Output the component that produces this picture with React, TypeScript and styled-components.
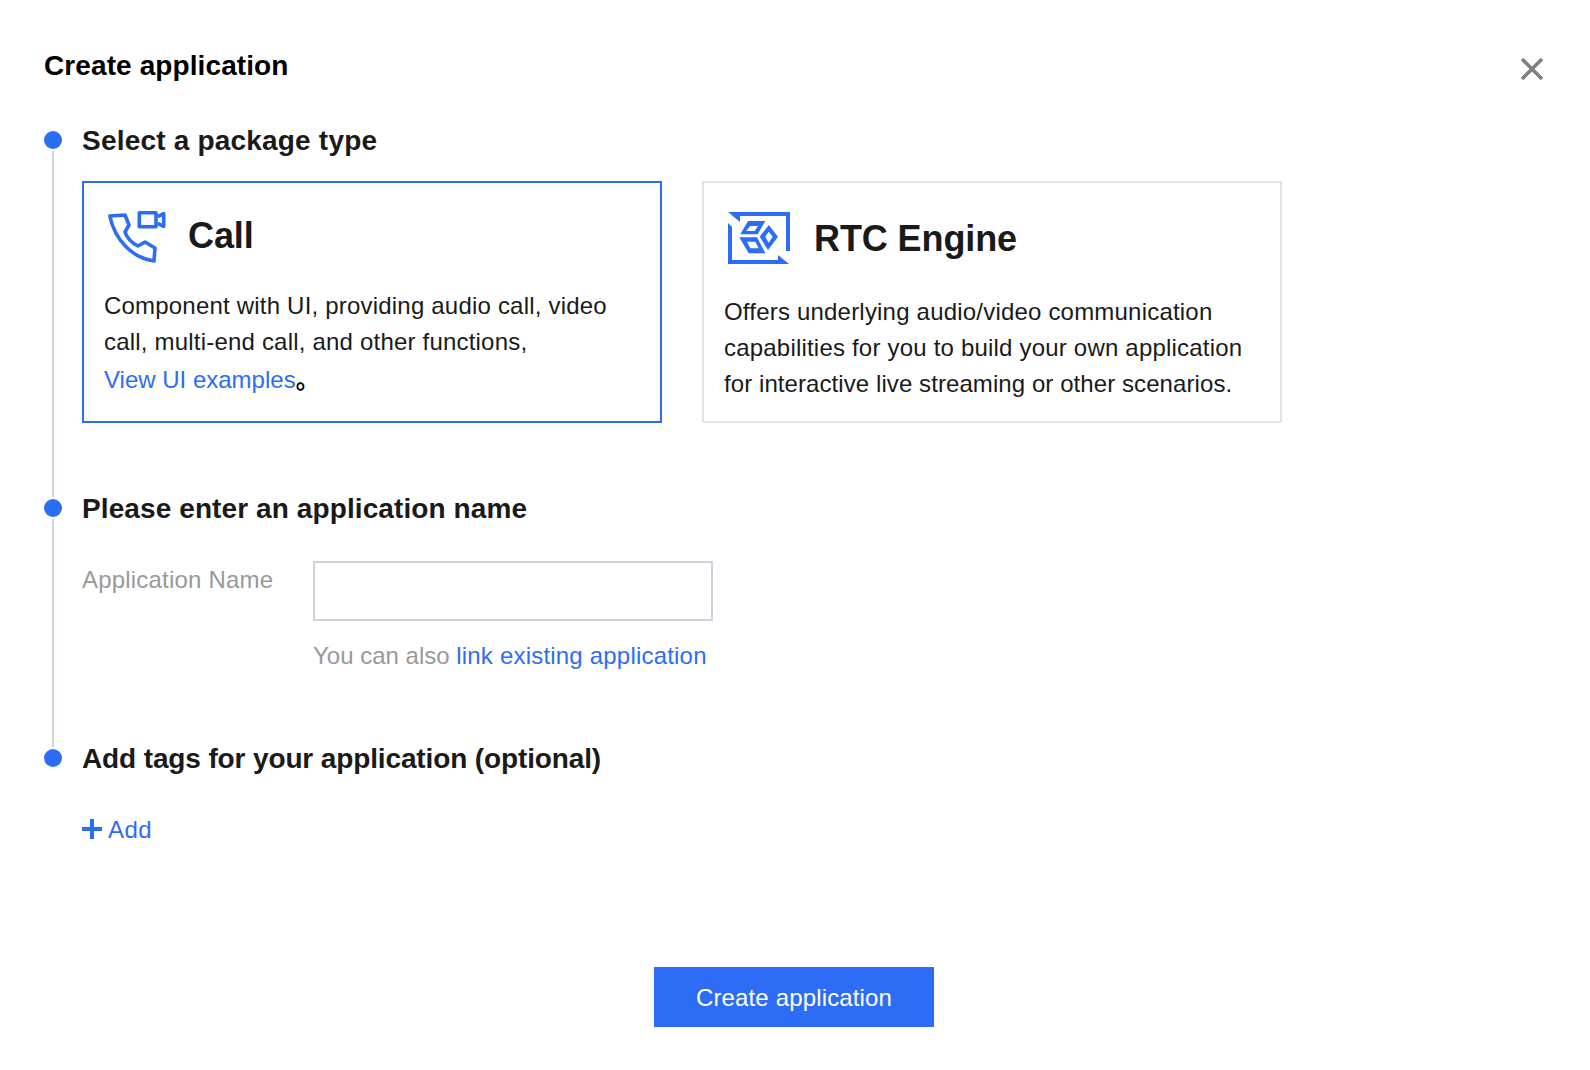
import React from "react";
import styled, { createGlobalStyle } from "styled-components";

const GlobalStyle = createGlobalStyle`
  * { box-sizing: border-box; }
  html, body { margin: 0; background: #fff; }
  body { font-family: "Liberation Sans", Arial, sans-serif; color: #1a1a1a; }
`;

const Dialog = styled.div`
  width: 1590px;
  height: 1070px;
  padding: 49px 44px 43px 44px;
  display: flex;
  flex-direction: column;
`;

const Header = styled.div`
  display: flex;
  justify-content: space-between;
  align-items: center;
  height: 34px;
  margin-bottom: 40px;
`;

const Title = styled.h1`
  margin: 0;
  font-size: 28px;
  line-height: 34px;
  font-weight: 700;
  letter-spacing: 0.1px;
  color: #000;
`;

const CloseButton = styled.button`
  border: none;
  background: none;
  padding: 0;
  margin: 5px 2px 0 0;
  width: 24px;
  height: 24px;
  cursor: pointer;
  display: flex;
`;

const Steps = styled.div`
  flex: 1;
`;

const Step = styled.section<{ $height: number }>`
  display: grid;
  grid-template-columns: 18px 1fr;
  column-gap: 20px;
  height: ${(p) => p.$height}px;
`;

const Rail = styled.div`
  display: flex;
  flex-direction: column;
  align-items: center;
  padding-top: 8px;
`;

const Dot = styled.span`
  width: 18px;
  height: 18px;
  border-radius: 50%;
  background: #2d6df6;
  flex: none;
`;

const Line = styled.span`
  width: 2px;
  flex: 1;
  margin: 2px 0 -6px;
  background: #d0d4e4;
`;

const StepTitle = styled.h2<{ $track: number }>`
  margin: 0;
  font-size: 28px;
  line-height: 36px;
  font-weight: 700;
  letter-spacing: ${(p) => p.$track}px;
  color: #1a1a1a;
`;

const Cards = styled.div`
  display: flex;
  gap: 40px;
  margin-top: 22px;
`;

const Card = styled.div<{ $selected?: boolean }>`
  width: 580px;
  height: 242px;
  border: 2px solid ${(p) => (p.$selected ? "#2d6df6" : "#e5e5e5")};
  padding: ${(p) => (p.$selected ? "28px 20px" : "29px 20px")};
`;

const CardHead = styled.div<{ $gap: number; $inset: number }>`
  display: flex;
  align-items: center;
  gap: ${(p) => p.$gap}px;
  padding-left: ${(p) => p.$inset}px;
`;

const CardName = styled.div<{ $above?: number; $below?: number }>`
  margin: ${(p) => p.$above ?? 0}px 0 ${(p) => p.$below ?? 0}px;
  font-size: 36px;
  font-weight: 700;
  line-height: 44px;
  letter-spacing: -0.1px;
  color: #1a1a1a;
`;

const CardText = styled.p<{ $top: number }>`
  margin: ${(p) => p.$top}px 0 0;
  font-size: 24px;
  line-height: 36px;
  letter-spacing: 0.2px;
  color: #1a1a1a;
  white-space: nowrap;
`;

const TightLine = styled.span`
  letter-spacing: 0.08px;
`;

const Link = styled.a`
  color: #2d6df6;
  text-decoration: none;
  cursor: pointer;
`;

const ExampleLink = styled(Link)`
  display: inline-block;
  margin-top: 1px;
  letter-spacing: 0;
`;

const Stop = styled.span`
  font-family: "Noto Sans CJK SC", sans-serif;
  font-weight: 700;
  color: #000;
`;

const Row = styled.div`
  display: grid;
  grid-template-columns: 231px 400px;
  margin-top: 34px;
`;

const Label = styled.label`
  font-size: 24px;
  line-height: 38px;
  letter-spacing: 0.2px;
  color: #999;
`;

const Input = styled.input`
  display: block;
  width: 400px;
  height: 60px;
  border: 2px solid #cfd1dc;
  outline: none;
  background: #fff;
  font-size: 24px;
  padding: 0 16px;
`;

const Hint = styled.p`
  grid-column: 2;
  margin: 17px 0 0;
  font-size: 24px;
  line-height: 36px;
  color: #999;
  white-space: nowrap;

  a {
    letter-spacing: 0.2px;
  }
`;

const AddLink = styled.a`
  display: flex;
  align-items: center;
  gap: 6px;
  margin-top: 35px;
  font-size: 24px;
  line-height: 36px;
  letter-spacing: 0.5px;
  color: #2d6df6;
  cursor: pointer;

  svg {
    margin-top: -3px;
  }
`;

const Footer = styled.div`
  display: flex;
  justify-content: center;
  padding-right: 2px;
`;

const PrimaryButton = styled.button`
  width: 280px;
  height: 60px;
  border: none;
  padding: 1px 0 0;
  background: #2d6df6;
  color: #fff;
  font-family: inherit;
  font-size: 24px;
  letter-spacing: 0.15px;
  cursor: pointer;
`;

function CallIcon() {
  return (
    <svg width="58" height="52" viewBox="0 0 58 52" fill="none" stroke="#2d6df6" strokeWidth="3.6" strokeLinejoin="round">
      <path d="M1.8 5 L17 4 L21 14 L17 21 C19 27 24 32 30 35 L37 31 L47 37 L46 50 C25 47 7 30 1.8 5 Z" />
      <rect x="31.3" y="1.8" width="16.7" height="14" />
      <path d="M49.7 5.7 L55.7 2.6 V15.4 L49.7 12.3" />
    </svg>
  );
}

function RtcIcon() {
  return (
    <svg width="62" height="52" viewBox="0 0 62 52" fill="#2d6df6">
      <path d="M0 0 H62 V39 H58 V4 H12 V10 Z" />
      <path d="M0 11 L4 15 V48 H50 V43 L61 52 H0 Z" />
      <path fillRule="evenodd" d="M20 9 H37.3 L29.7 22.3 H12.3 Z M22.3 14 L18.3 19 H26.7 L30 14 Z" />
      <path fillRule="evenodd" d="M11.3 25.3 H29 L37.3 41.3 H20.7 Z M19 29.7 L22.3 36.3 H30.7 L27.3 29.7 Z" />
      <path fillRule="evenodd" d="M40.7 13 L50 24.7 L40 38 L31.7 24.7 Z M40.7 19.7 L37.3 24.7 L40.7 30.7 L44.7 24.7 Z" />
    </svg>
  );
}

export default function App() {
  return (
    <>
      <GlobalStyle />
      <Dialog>
        <Header>
          <Title>Create application</Title>
          <CloseButton aria-label="Close">
            <svg width="24" height="24" viewBox="0 0 24 24" stroke="#808080" strokeWidth="3.6">
              <path d="M2 2 L22 22 M22 2 L2 22" />
            </svg>
          </CloseButton>
        </Header>
        <Steps>
          <Step $height={368}>
            <Rail>
              <Dot />
              <Line />
            </Rail>
            <div>
              <StepTitle $track={0.2}>Select a package type</StepTitle>
              <Cards>
                <Card $selected>
                  <CardHead $gap={22} $inset={4}>
                    <CallIcon />
                    <CardName $below={2}>Call</CardName>
                  </CardHead>
                  <CardText $top={25}>
                    Component with UI, providing audio call, video
                    <br />
                    call, multi-end call, and other functions,
                    <br />
                    <ExampleLink>View UI examples</ExampleLink>
                    <Stop>。</Stop>
                  </CardText>
                </Card>
                <Card>
                  <CardHead $gap={24} $inset={4}>
                    <RtcIcon />
                    <CardName $above={2}>RTC Engine</CardName>
                  </CardHead>
                  <CardText $top={30}>
                    Offers underlying audio/video communication
                    <br />
                    capabilities for you to build your own application
                    <br />
                    <TightLine>for interactive live streaming or other scenarios.</TightLine>
                  </CardText>
                </Card>
              </Cards>
            </div>
          </Step>
          <Step $height={250}>
            <Rail>
              <Dot />
              <Line />
            </Rail>
            <div>
              <StepTitle $track={0.1}>Please enter an application name</StepTitle>
              <Row>
                <Label>Application Name</Label>
                <Input />
                <Hint>
                  You can also <Link>link existing application</Link>
                </Hint>
              </Row>
            </div>
          </Step>
          <Step $height={200}>
            <Rail>
              <Dot />
            </Rail>
            <div>
              <StepTitle $track={-0.13}>Add tags for your application (optional)</StepTitle>
              <AddLink>
                <svg width="20" height="20" viewBox="0 0 20 20" fill="#2d6df6">
                  <path d="M8 0 H12 V8 H20 V12 H12 V20 H8 V12 H0 V8 H8 Z" />
                </svg>
                Add
              </AddLink>
            </div>
          </Step>
        </Steps>
        <Footer>
          <PrimaryButton>Create application</PrimaryButton>
        </Footer>
      </Dialog>
    </>
  );
}
